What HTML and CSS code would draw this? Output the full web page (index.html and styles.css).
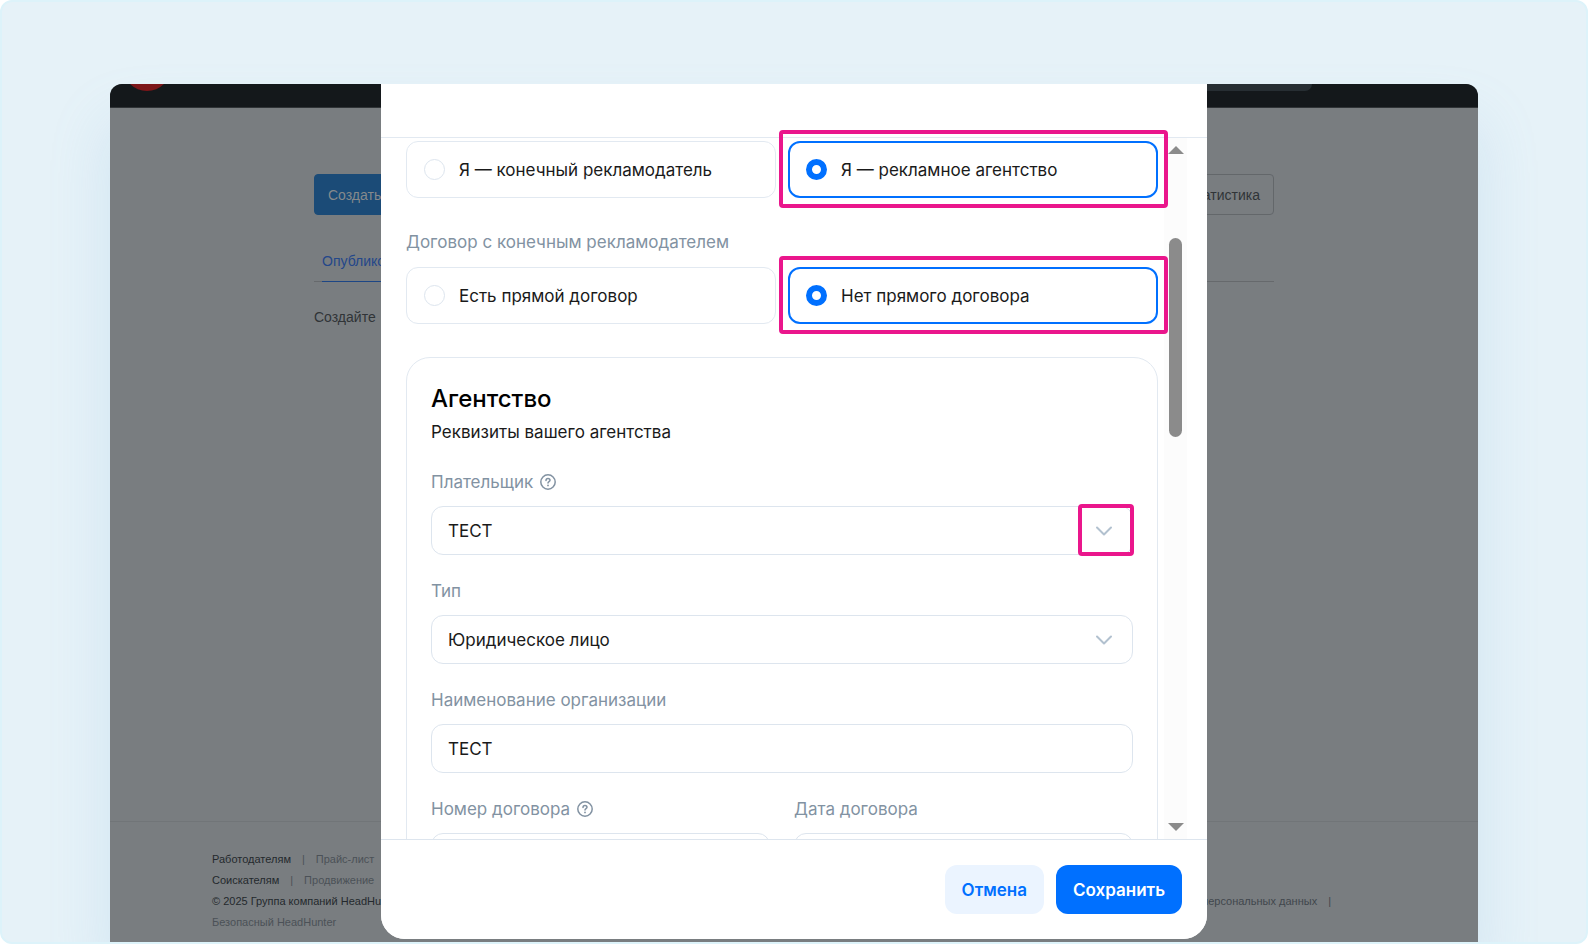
FILE: index.html
```html
<!DOCTYPE html>
<html lang="ru">
<head>
    <meta charset="UTF-8">
    <meta name="viewport" content="width=device-width, initial-scale=1.0">
    <title>Данные рекламодателя</title>
    <link rel="stylesheet" href="styles.css">
</head>
<body>
    <div class="window">
        <div class="page">
            <header class="topbar">
                <svg class="logo" width="48" height="8" viewBox="0 40 48 8" aria-hidden="true">
                    <circle cx="24" cy="23" r="24" fill="#7c1619"/>
                </svg>
                <div class="topbar-search"></div>
            </header>
            <main class="content">
                <div class="toolbar">
                    <button class="btn-create" type="button">Создать</button>
                    <button class="btn-stats" type="button">Статистика</button>
                </div>
                <nav class="tabs">
                    <a class="tab" href="#">Опубликованные</a>
                </nav>
                <p class="hint">Создайте</p>
            </main>
            <footer class="page-footer">
                <div class="footer-links">
                    <div><a class="strong" href="#">Работодателям</a><span>|</span><a href="#">Прайс-лист</a></div>
                    <div><a class="strong" href="#">Соискателям</a><span>|</span><a href="#">Продвижение</a></div>
                    <div class="strong">© 2025 Группа компаний HeadHunter</div>
                    <div><a href="#">Безопасный HeadHunter</a></div>
                </div>
                <div class="footer-policy"><a href="#">персональных данных</a><span>|</span></div>
            </footer>
        </div>

        <!-- Модальное окно -->
        <div class="overlay">
            <form class="modal" role="dialog" aria-label="Данные рекламодателя">
                <div class="modal-header"></div>
                <div class="modal-body">
                    <div class="form">
                        <div class="choices">
                            <label class="choice"><input type="radio" name="role">Я — конечный рекламодатель</label>
                            <label class="choice highlight"><input type="radio" name="role" checked>Я — рекламное агентство</label>
                        </div>

                        <div class="label choices-label">Договор с конечным рекламодателем</div>
                        <div class="choices">
                            <label class="choice"><input type="radio" name="contract">Есть прямой договор</label>
                            <label class="choice highlight"><input type="radio" name="contract" checked>Нет прямого договора</label>
                        </div>

                        <section class="card">
                            <h2>Агентство</h2>
                            <p class="card-text">Реквизиты вашего агентства</p>
                            <div class="fields">
                                <div class="field wide">
                                    <label class="label" for="payer">Плательщик
                                        <svg class="help" width="16" height="16" viewBox="0 0 16 16" fill="none" stroke="currentColor" stroke-width="1.5" stroke-linecap="round" aria-hidden="true">
                                            <circle cx="8" cy="8" r="7.2"/>
                                            <path d="M6 6.4C6 5.2 6.8 4.5 8 4.5s2 .8 2 1.8c0 1.3-2 1.4-2 2.7"/>
                                            <circle cx="8" cy="11.4" r=".9" fill="currentColor" stroke="none"/>
                                        </svg>
                                    </label>
                                    <div class="select select-marked">
                                        <select id="payer"><option>ТЕСТ</option></select>
                                        <svg class="chevron" width="18" height="10" viewBox="0 0 18 10" fill="none" stroke="#b2c1cf" stroke-width="2" stroke-linecap="round" stroke-linejoin="round" aria-hidden="true"><path d="M2 1.5l7 7 7-7"/></svg>
                                    </div>
                                </div>
                                <div class="field wide">
                                    <label class="label" for="type">Тип</label>
                                    <div class="select">
                                        <select id="type"><option>Юридическое лицо</option></select>
                                        <svg class="chevron" width="18" height="10" viewBox="0 0 18 10" fill="none" stroke="#b2c1cf" stroke-width="2" stroke-linecap="round" stroke-linejoin="round" aria-hidden="true"><path d="M2 1.5l7 7 7-7"/></svg>
                                    </div>
                                </div>
                                <div class="field wide">
                                    <label class="label" for="org">Наименование организации</label>
                                    <input class="input" id="org" type="text" value="ТЕСТ">
                                </div>
                                <div class="field">
                                    <label class="label" for="number">Номер договора
                                        <svg class="help" width="16" height="16" viewBox="0 0 16 16" fill="none" stroke="currentColor" stroke-width="1.5" stroke-linecap="round" aria-hidden="true">
                                            <circle cx="8" cy="8" r="7.2"/>
                                            <path d="M6 6.4C6 5.2 6.8 4.5 8 4.5s2 .8 2 1.8c0 1.3-2 1.4-2 2.7"/>
                                            <circle cx="8" cy="11.4" r=".9" fill="currentColor" stroke="none"/>
                                        </svg>
                                    </label>
                                    <input class="input" id="number" type="text">
                                </div>
                                <div class="field">
                                    <label class="label" for="date">Дата договора</label>
                                    <input class="input" id="date" type="text">
                                </div>
                            </div>
                        </section>
                    </div>
                    <div class="scrollbar" aria-hidden="true">
                        <svg width="16" height="8" viewBox="0 0 16 8"><path d="M0 8l8-8 8 8z" fill="#8b8b8b"/></svg>
                        <div class="scroll-area"><div class="thumb"></div></div>
                        <svg width="16" height="8" viewBox="0 0 16 8"><path d="M0 0l8 8 8-8z" fill="#8b8b8b"/></svg>
                    </div>
                </div>
                <div class="modal-footer">
                    <button class="btn btn-cancel" type="button">Отмена</button>
                    <button class="btn btn-save" type="button">Сохранить</button>
                </div>
            </form>
        </div>
    </div>
</body>
</html>
```

FILE: styles.css
```css
*,
*::after {
    box-sizing: border-box;
}

html {
    background-color: #fff;
}

body {
    display: flex;
    height: 100vh;
    margin: 0;
    padding: 82px 108px 0;
    overflow: hidden;
    font-family: Inter, "Noto Sans", sans-serif;
    font-size: 17px;
    line-height: 24px;
    color: #1a1a1a;
    background-color: #e6f2f8;
    border: 2px solid #ddf3fa;
    border-radius: 12px;
}

a {
    color: inherit;
    text-decoration: none;
}

button,
input,
select {
    font: inherit;
    color: inherit;
}

.window {
    position: relative;
    flex: 1;
    display: flex;
    border-radius: 12px 12px 0 0;
    box-shadow: 0 40px 60px rgba(130, 180, 225, 0.22);
}

/* Затемнённая страница под окном */
.page {
    flex: 1;
    display: flex;
    flex-direction: column;
    overflow: hidden;
    font-family: "Liberation Sans", Arial, sans-serif;
    font-size: 14px;
    line-height: 20px;
    color: #303437;
    background-color: #797d80;
    border-radius: 12px 12px 0 0;
}

.topbar {
    display: flex;
    justify-content: space-between;
    height: 24px;
    padding: 0 166px 0 13px;
    background-color: #14181b;
    border-bottom: 1px solid #303437;
}

.topbar-search {
    width: 280px;
    height: 7px;
    background-color: #272e33;
    border-radius: 0 0 10px 10px;
}

.content {
    flex: 1;
    width: 100%;
    max-width: 960px;
    margin: 0 auto;
    padding-top: 66px;
}

.toolbar {
    display: flex;
    justify-content: space-between;
}

.toolbar button {
    height: 41px;
    padding: 0 13px;
    border: 1px solid #63676a;
    border-radius: 4px;
    background: none;
}

.toolbar .btn-create {
    color: #85898c;
    background-color: #1b4b77;
    border-color: #1b4b77;
}

.tabs {
    display: flex;
    margin-top: 26px;
    padding-left: 8px;
    border-bottom: 1px solid #66696c;
}

.tab {
    margin-bottom: -1px;
    padding: 10px 0;
    color: #24478a;
    border-bottom: 1px solid #1d4685;
}

.hint {
    margin: 25px 0 0;
}

.page-footer {
    display: flex;
    justify-content: space-between;
    align-items: flex-end;
    padding: 27px 147px 10px 102px;
    font-size: 11px;
    color: #4b5157;
    border-top: 1px solid #717578;
}

.footer-links {
    display: grid;
    gap: 1px;
}

.footer-links span,
.footer-policy span {
    margin-left: 11px;
}

.footer-links span {
    margin-right: 11px;
}

.footer-policy {
    margin-bottom: 21px;
    color: #41474d;
}

.strong {
    color: #24292d;
}

/* Окно */
.overlay {
    position: absolute;
    inset: 0;
    display: flex;
    justify-content: center;
    padding-bottom: 3px;
}

.modal {
    display: flex;
    flex-direction: column;
    width: 100%;
    max-width: 826px;
    overflow: hidden;
    background-color: #fff;
    border-radius: 0 0 24px 24px;
}

.modal-header {
    flex: none;
    height: 54px;
    border-bottom: 1px solid #e2e9f1;
}

.modal-body {
    flex: 1;
    display: flex;
    min-height: 0;
    padding: 0 20px 0 25px;
}

.form {
    flex: 1;
    padding-top: 3px;
}

.label {
    display: flex;
    align-items: center;
    gap: 7px;
    color: #8292a2;
}

.choices {
    display: grid;
    grid-template-columns: 1fr 1fr;
    gap: 12px;
}

.choices-label {
    margin: 32px 0 13px;
}

.choice {
    position: relative;
    display: flex;
    align-items: center;
    gap: 14px;
    height: 57px;
    padding: 0 17px;
    border: 1px solid #e2e9f1;
    border-radius: 12px;
}

.choice input {
    appearance: none;
    width: 21px;
    height: 21px;
    margin: 0;
    border: 1px solid #dde5ee;
    border-radius: 50%;
}

.choice input:checked {
    border: 6px solid #0070ff;
}

.choice:has(input:checked) {
    padding: 0 16px;
    border: 2px solid #0070ff;
}

/* Розовые рамки-подсказки */
.highlight::after,
.select-marked::after {
    content: "";
    position: absolute;
    border: 4px solid #ea168c;
    border-radius: 4px;
    pointer-events: none;
}

.highlight::after {
    inset: -13px -12px -12px -11px;
}

.select-marked::after {
    inset: -2px -1px -1px auto;
    width: 56px;
}

.card {
    margin-top: 33px;
    padding: 25px 24px 24px;
    border: 1px solid #e2e9f1;
    border-radius: 24px;
}

.card h2 {
    margin: 0;
    font-size: 24px;
    font-weight: 500;
    line-height: 32px;
    color: #000;
}

.card-text {
    margin: 5px 0 26px;
}

.fields {
    display: grid;
    grid-template-columns: 1fr 1fr;
    gap: 24px;
}

.field {
    display: grid;
    gap: 12px;
}

.wide {
    grid-column: span 2;
}

.select {
    position: relative;
}

.input,
.select select {
    display: block;
    appearance: none;
    width: 100%;
    height: 49px;
    padding: 0 16px;
    background-color: #fff;
    border: 1px solid #dde5ee;
    border-radius: 12px;
}

.chevron {
    position: absolute;
    top: 20px;
    right: 20px;
}

.scrollbar {
    display: flex;
    flex-direction: column;
    align-items: center;
    width: 23px;
    margin-left: 6px;
    padding: 8px 0;
    background-color: #fcfcfc;
}

.scroll-area {
    flex: 1;
    padding-top: 84px;
}

.thumb {
    width: 13px;
    height: 199px;
    background-color: #8b8b8b;
    border-radius: 7px;
}

.modal-footer {
    position: relative;
    z-index: 1;
    display: flex;
    justify-content: flex-end;
    gap: 12px;
    padding: 25px;
    background-color: #fff;
    border-top: 1px solid #dde5ee;
}

.btn {
    height: 49px;
    padding: 0 17px;
    font-weight: 600;
    border: none;
    border-radius: 12px;
    cursor: pointer;
}

.btn-cancel {
    color: #0070ff;
    background-color: #ebf4ff;
}

.btn-save {
    color: #fff;
    background-color: #0070ff;
}
```
